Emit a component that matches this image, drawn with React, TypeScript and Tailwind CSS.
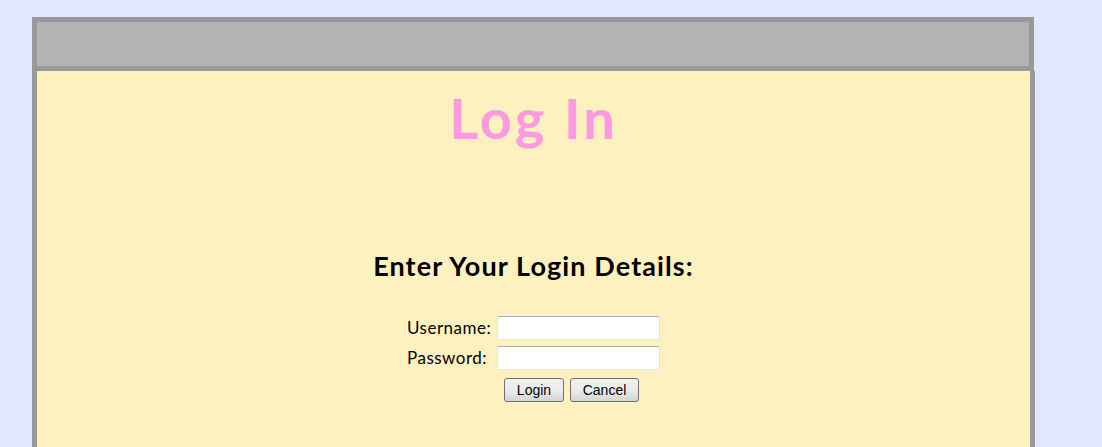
import React from "react";

export default function App() {
  const comic = { fontFamily: '"Comic Sans MS", Lato, "DejaVu Sans", sans-serif' };
  return (
    <div className="min-h-screen bg-[#dfe8ff] pt-[17px] pl-[32px] overflow-hidden h-[447px]">
      <div className="w-[1002px] h-[54px] border-[5px] border-[#999999] bg-[#b3b3b3]" />
      <div className="w-[1003px] h-[400px] border-x-[5px] border-[#999999] bg-[#fef1c0] flex flex-col items-center" style={comic}>
        <h1 className="mt-[12px] text-[56px] leading-[70px] font-bold tracking-[3px] text-[#ff99e0]">Log In</h1>
        <h2 className="mt-[96px] text-[27px] leading-[34px] font-bold tracking-[1.1px] text-black">Enter Your Login Details:</h2>
        <div className="mt-[30px] flex flex-col text-[17px] tracking-[0.5px] text-black">
          <div className="flex items-center h-[30px]">
            <span className="w-[90px]">Username:</span>
            <input className="w-[163px] h-[24px] bg-white border border-[#abadb3] border-l-[#e2e3ea] border-r-[#dbdfe6] border-b-[#e3e9ef] rounded-[2px] outline-none" />
          </div>
          <div className="flex items-center h-[30px]">
            <span className="w-[90px]">Password:</span>
            <input type="password" className="w-[163px] h-[24px] bg-white border border-[#abadb3] border-l-[#e2e3ea] border-r-[#dbdfe6] border-b-[#e3e9ef] rounded-[2px] outline-none" />
          </div>
          <div className="flex mt-[5px] pl-[97px] gap-[6px] text-[14px] tracking-normal">
            <button className="w-[60px] h-[24px] border border-[#707070] rounded-[3px] bg-gradient-to-b from-[#f2f2f2] via-[#ebebeb] to-[#d4d4d4] text-black leading-none" style={{ fontFamily: '"Liberation Sans", Arial, sans-serif' }}>Login</button>
            <button className="w-[69px] h-[24px] border border-[#707070] rounded-[3px] bg-gradient-to-b from-[#f2f2f2] via-[#ebebeb] to-[#d4d4d4] text-black leading-none" style={{ fontFamily: '"Liberation Sans", Arial, sans-serif' }}>Cancel</button>
          </div>
        </div>
      </div>
    </div>
  );
}
